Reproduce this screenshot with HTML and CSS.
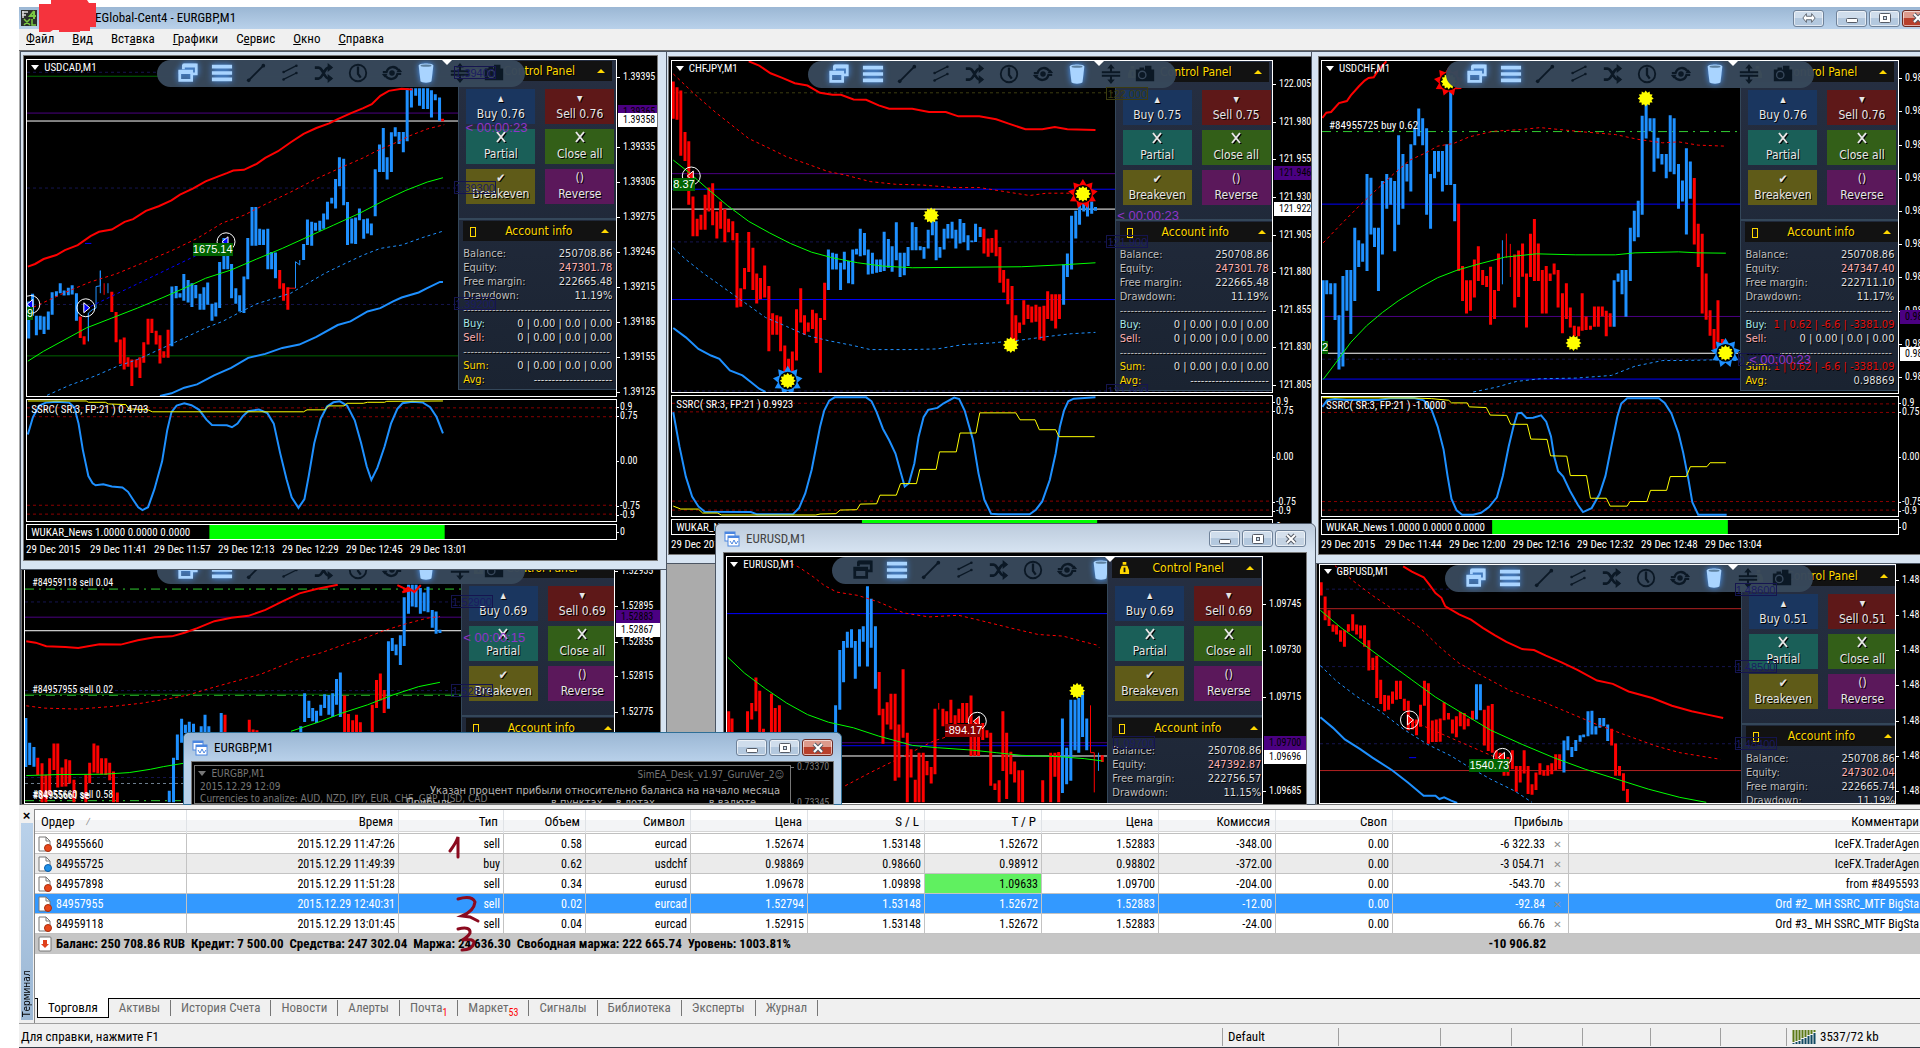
FILE: index.html
```
<!DOCTYPE html>
<html lang="ru">
<head>
<meta charset="utf-8">
<title>EGlobal-Cent4 - EURGBP,M1</title>
<link rel="stylesheet" href="styles.css">
</head>
<body>
<svg class="defs" aria-hidden="true">
  <symbol id="i-windows" viewBox="0 0 24 24"><path d="M7 3h14v10h-4M7 3v5" fill="none" stroke="currentColor" stroke-width="3"/><path d="M3 10h13v10H3z" fill="none" stroke="currentColor" stroke-width="3"/><path d="M6 4h15M2 11h15" stroke="currentColor" stroke-width="4"/></symbol>
  <symbol id="i-bars" viewBox="0 0 24 24"><path d="M1 5h22M1 12h22M1 19h22" stroke="currentColor" stroke-width="4"/></symbol>
  <symbol id="i-line" viewBox="0 0 24 24"><path d="M4 20L20 4" stroke="currentColor" stroke-width="2"/><circle cx="4" cy="20" r="2" fill="currentColor"/><circle cx="20" cy="4" r="2" fill="currentColor"/></symbol>
  <symbol id="i-channel" viewBox="0 0 24 24"><path d="M5 11L19 4M5 19L19 12" stroke="currentColor" stroke-width="1.5"/><circle cx="5" cy="11" r="1.4" fill="currentColor"/><circle cx="19" cy="4" r="1.4" fill="currentColor"/><circle cx="5" cy="19" r="1.4" fill="currentColor"/><circle cx="19" cy="12" r="1.4" fill="currentColor"/></symbol>
  <symbol id="i-shuffle" viewBox="0 0 24 24"><path d="M2 6h4c5 0 6 12 11 12h3M2 18h4c5 0 6-12 11-12h3" fill="none" stroke="currentColor" stroke-width="3"/><path d="M16 1l6 5-6 5zM16 13l6 5-6 5z" fill="currentColor"/></symbol>
  <symbol id="i-clock" viewBox="0 0 24 24"><circle cx="12" cy="12" r="9" fill="none" stroke="currentColor" stroke-width="2"/><path d="M12 5v8l3 4" fill="none" stroke="currentColor" stroke-width="2.5"/></symbol>
  <symbol id="i-eye" viewBox="0 0 24 24"><path d="M2 11h4c2-7 10-7 13-2M22 13h-4c-2 7-10 7-13 2" fill="none" stroke="currentColor" stroke-width="2.5"/><path d="M17 11h6l-3-4zM1 13h6l-3 4z" fill="currentColor"/><circle cx="12" cy="12" r="3" fill="currentColor"/></symbol>
  <symbol id="i-bucket" viewBox="0 0 24 24"><path d="M4 4c0-3 16-3 16 0l-2 17c-1 2-11 2-12 0z" fill="currentColor"/><ellipse cx="12" cy="4" rx="6" ry="1.2" fill="#5b7f9f"/></symbol>
  <symbol id="i-spread" viewBox="0 0 24 24"><path d="M2 10h20M2 14h20M12 3v6M12 15v6" stroke="currentColor" stroke-width="2.2"/><path d="M8 6l4-5 4 5zM8 18l4 5 4-5z" fill="currentColor"/></symbol>
  <symbol id="i-camera" viewBox="0 0 24 24"><path d="M2 7h4V5h5v2h1V3h7v4h3v13H2z" fill="currentColor"/><circle cx="9" cy="13" r="4" fill="none" stroke="#37475a" stroke-width="1.5"/></symbol>
  <symbol id="i-bag" viewBox="0 0 12 14"><path d="M4 0h4v3H4zM3 4h6l2 5v4H1V9z" fill="#ffd800"/><path d="M6 6v5" stroke="#111" stroke-width="2"/></symbol>
  <symbol id="i-chart" viewBox="0 0 16 16"><rect x="1" y="1" width="10" height="9" fill="#fff" stroke="#4a86e0"/><path d="M1 2h10" stroke="#4a86e0" stroke-width="2"/><rect x="4" y="5" width="11" height="10" fill="#fff" stroke="#4a86e0"/><path d="M4 6h11" stroke="#4a86e0" stroke-width="2"/><path d="M6 10l2 3 2-4 2 4 2-3" fill="none" stroke="#4a86e0"/></symbol>
  <symbol id="i-min" viewBox="0 0 14 12"><rect x="1.500" y="6.500" width="11" height="4" rx="1" fill="#fff" stroke="#555b66"/></symbol>
  <symbol id="i-max" viewBox="0 0 14 12"><rect x="1.500" y="1.500" width="11" height="9" rx="1" fill="#fff" stroke="#555b66"/><rect x="5.500" y="4.500" width="3" height="3" fill="#cfe0ef" stroke="#555b66"/></symbol>
  <symbol id="i-close" viewBox="0 0 14 12"><path d="M3 2l8 8M11 2l-8 8" stroke="#555b66" stroke-width="4"/><path d="M3 2l8 8M11 2l-8 8" stroke="#fff" stroke-width="2"/></symbol>
  <symbol id="i-swap" viewBox="0 0 16 12"><path d="M1 6l4-5v3h6V1l4 5-4 5V8H5v3z" fill="#fff" stroke="#555b66"/></symbol>
  <symbol id="i-cross" viewBox="0 0 12 12"><path d="M2 1l8 10M10 1L2 11" stroke="#000" stroke-width="2" transform="translate(1 1)"/><path d="M2 1l8 10M10 1L2 11" stroke="#e6e6e6" stroke-width="2"/></symbol>
  <symbol id="i-sell" viewBox="0 0 16 16"><path d="M2 1h7l4 4v10H2z" fill="#fff" stroke="#777"/><path d="M9 1v4h4" fill="none" stroke="#777"/><circle cx="11" cy="12" r="3.500" fill="#e8481c" stroke="#a92c0a"/></symbol>
  <symbol id="i-buy" viewBox="0 0 16 16"><path d="M2 1h7l4 4v10H2z" fill="#fff" stroke="#777"/><path d="M9 1v4h4" fill="none" stroke="#777"/><circle cx="11" cy="12" r="3.500" fill="#1e90e8" stroke="#0a5ca9"/></symbol>
  <symbol id="i-total" viewBox="0 0 16 16"><rect x="2" y="1" width="12" height="14" rx="1" fill="#fff" stroke="#777"/><path d="M8 12L4 8h2V4h4v4h2z" fill="#e0401c"/></symbol>
</svg>

<div class="app">
  <header class="titlebar">
    <svg class="logo" viewBox="0 0 16 16" aria-hidden="true"><rect width="16" height="16" fill="#2b2f2b"/><path d="M1 2h6M2 1v7M1 5h4" stroke="#ddd" stroke-width="1.500"/><path d="M13 1L9 6h6M13 1v8" fill="none" stroke="#7ac943" stroke-width="2"/><path d="M3 9l6 6M9 9l-6 6M11 9v6h4" fill="none" stroke="#7ac943" stroke-width="1.500"/></svg>
    <svg class="blot" viewBox="0 0 57 33" aria-hidden="true"><path d="M0 4h12V0h36l2 3h7v24h-6v4H41v1H20v-2h-6l-3 2H0z" fill="#f5333d"/></svg>
    <h1>EGlobal-Cent4 - EURGBP,M1</h1>
    <div class="sysbuttons">
      <button class="sys swap" aria-label="Switch"><svg><use href="#i-swap"/></svg></button>
      <button class="sys" aria-label="Minimize"><svg><use href="#i-min"/></svg></button>
      <button class="sys" aria-label="Maximize"><svg><use href="#i-max"/></svg></button>
      <button class="sys close" aria-label="Close"><svg><use href="#i-close"/></svg></button>
    </div>
  </header>
  <nav class="menubar">
    <a href="#"><u>Ф</u>айл</a><a href="#"><u>В</u>ид</a><a href="#">Вст<u>а</u>вка</a><a href="#"><u>Г</u>рафики</a><a href="#">С<u>е</u>рвис</a><a href="#"><u>О</u>кно</a><a href="#"><u>С</u>правка</a>
  </nav>
  <main class="workspace" id="workspace"></main>

  <section class="terminal" aria-label="Терминал">
    <div class="side"><button class="hide" aria-label="Закрыть">×</button><div class="sidebar"><span>Терминал</span></div></div>
    <div class="content">
      <div class="tablewrap">
      <table>
        <colgroup><col class="c-order"><col class="c-time"><col class="c-type"><col class="c-vol"><col class="c-type"><col class="c-price"><col class="c-price"><col class="c-price"><col class="c-price"><col class="c-price"><col class="c-price"><col class="c-profit"><col></colgroup>
        <thead><tr><th>Ордер <i>⁄</i></th><th>Время</th><th>Тип</th><th>Объем</th><th>Символ</th><th>Цена</th><th>S / L</th><th>T / P</th><th>Цена</th><th>Комиссия</th><th>Своп</th><th>Прибыль</th><th>Комментари</th></tr></thead>
        <tbody>
          <tr><td><svg><use href="#i-sell"/></svg>84955660</td><td>2015.12.29 11:47:26</td><td>sell</td><td>0.58</td><td>eurcad</td><td>1.52674</td><td>1.53148</td><td>1.52672</td><td>1.52883</td><td>-348.00</td><td>0.00</td><td>-6 322.33<button aria-label="Закрыть">✕</button></td><td>IceFX.TraderAgen</td></tr>
          <tr class="alt"><td><svg><use href="#i-buy"/></svg>84955725</td><td>2015.12.29 11:49:39</td><td>buy</td><td>0.62</td><td>usdchf</td><td>0.98869</td><td>0.98660</td><td>0.98912</td><td>0.98802</td><td>-372.00</td><td>0.00</td><td>-3 054.71<button aria-label="Закрыть">✕</button></td><td>IceFX.TraderAgen</td></tr>
          <tr><td><svg><use href="#i-sell"/></svg>84957898</td><td>2015.12.29 11:51:28</td><td>sell</td><td>0.34</td><td>eurusd</td><td>1.09678</td><td>1.09898</td><td class="hit">1.09633</td><td>1.09700</td><td>-204.00</td><td>0.00</td><td>-543.70<button aria-label="Закрыть">✕</button></td><td>from #8495593</td></tr>
          <tr class="selected"><td><svg><use href="#i-sell"/></svg>84957955</td><td>2015.12.29 12:40:31</td><td>sell</td><td>0.02</td><td>eurcad</td><td>1.52794</td><td>1.53148</td><td>1.52672</td><td>1.52883</td><td>-12.00</td><td>0.00</td><td>-92.84<button aria-label="Закрыть">✕</button></td><td>Ord #2_ MH SSRC_MTF BigSta</td></tr>
          <tr><td><svg><use href="#i-sell"/></svg>84959118</td><td>2015.12.29 13:01:45</td><td>sell</td><td>0.04</td><td>eurcad</td><td>1.52915</td><td>1.53148</td><td>1.52672</td><td>1.52883</td><td>-24.00</td><td>0.00</td><td>66.76<button aria-label="Закрыть">✕</button></td><td>Ord #3_ MH SSRC_MTF BigSta</td></tr>
        </tbody>
        <tfoot><tr><td colspan="11"><svg><use href="#i-total"/></svg>Баланс: 250 708.86 RUB&nbsp; Кредит: 7 500.00&nbsp; Средства: 247 302.04&nbsp; Маржа: 24 636.30&nbsp; Свободная маржа: 222 665.74&nbsp; Уровень: 1003.81%</td><td class="total">-10 906.82</td><td></td></tr></tfoot>
      </table>
      <svg class="ink" viewBox="0 0 40 126" aria-hidden="true"><g fill="none" stroke="#8b0a1e" stroke-width="3" stroke-linecap="round"><path d="M2 16q6-8 8-14v20"/><path d="M10 64q14-4 17 3q-1 9-13 14l8 1 8 4"/><path d="M10 94q13-3 12 4q-2 4-8 7q12-2 12 3q-2 7-12 7"/></g></svg>
      </div>
      <nav class="tabs">
        <a href="#" class="active">Торговля</a><a href="#">Активы</a><a href="#">История Счета</a><a href="#">Новости</a><a href="#">Алерты</a><a href="#">Почта<sub>1</sub></a><a href="#">Маркет<sub>53</sub></a><a href="#">Сигналы</a><a href="#">Библиотека</a><a href="#">Эксперты</a><a href="#">Журнал</a>
      </nav>
    </div>
  </section>
  <footer class="status">
    <span>Для справки, нажмите F1</span><span>Default</span><span></span><span></span><span></span><span></span><span></span><span></span>
    <span><svg viewBox="0 0 24 14" aria-hidden="true"><path d="M1.500 0v12M4.500 0v11M7.500 0v10M10.500 0v8M13.500 0v7M16.500 0v5M19.500 0v4M22.500 0v2" stroke="#5d7a17" stroke-width="2"/><path d="M1.500 13v1M4.500 12v2M7.500 11v3M10.500 9v5M13.500 8v6M16.500 6v8M19.500 5v9M22.500 3v11" stroke="#124a63" stroke-width="2"/></svg>3537/72 kb</span>
  </footer>
</div>
<script src="charts.js"></script>
</body>
</html>
```
FILE: styles.css
```
*, ::before, ::after { box-sizing: border-box; }
body { margin: 0; background: #fff; color: #000; font: 13px/16px "Roboto Condensed", "Open Sans", sans-serif; overflow: hidden; }
button { font: inherit; color: inherit; padding: 0; border: 0; background: none; }
a { color: inherit; text-decoration: none; }
.defs { position: absolute; width: 0; height: 0; }

.app { display: flex; flex-direction: column; height: 100vh; padding: 7px 0 0 19px; }

/* main window chrome */
.titlebar { position: relative; flex: none; display: flex; align-items: center; height: 22px; padding-left: 2px; background: linear-gradient(#9bb7d4, #b9d1ea); }
.titlebar h1 { margin: 0 auto 0 58px; padding-bottom: 1px; font-size: 13px; font-weight: 400; }
.logo { width: 16px; height: 16px; }
.blot { position: absolute; left: 20px; top: -7px; width: 57px; height: 33px; z-index: 1; }
.sysbuttons { display: flex; gap: 2px; margin-right: -13px; }
.sys { display: grid; place-items: center; width: 31px; height: 17px; border: 1px solid #6f8299; border-radius: 3px; background: linear-gradient(#cfddec 50%, #b3c8de 50%); box-shadow: inset 0 0 0 1px rgba(255,255,255,.6); }
.sys svg { width: 14px; height: 12px; }
.sys.swap { margin-right: 10px; }
.sys.close { border-color: #6b2a22; background: linear-gradient(#dd9a8c 50%, #b8402c 50%); }
.menubar { flex: none; display: flex; gap: 18px; align-items: center; height: 21px; padding: 0 0 2px 7px; background: #f0f0f0; }

/* MDI workspace */
.workspace { position: relative; flex: 1; min-height: 0; overflow: hidden; background: #ababab; border-top: 1px solid #696969; }
.win { position: absolute; isolation: isolate; display: flex; flex-direction: column; background: #d7e4f2; border: 1px solid #4b5563; }
.win.framed { border-radius: 6px 6px 0 0; }
.win header { flex: none; display: flex; align-items: center; gap: 6px; height: 29px; color: #444; }
.win header svg.ico { width: 16px; height: 16px; }
.win header h2 { margin: 0 auto 0 0; font-size: 13px; font-weight: 400; }
.win header .sysbuttons { margin: 0; }
.win.active { background: #b9d1ea; border-color: #2f6f96; }
.win.framed::before { content: ""; position: absolute; inset: 0 0 auto; height: 29px; z-index: -1; border-radius: 6px 6px 0 0; background: linear-gradient(#bccbdc, #d7e4f2); }
.win.active::before { background: linear-gradient(#9bb7d4, #b9d1ea); }
.win.active header { color: #000; }
.win.framed:not(.active) .sys.close { border-color: #6f8299; background: linear-gradient(#d5e0ec 50%, #c3d2e2 50%); }
.body { flex: 1; min-height: 0; display: grid; row-gap: 2px; padding: 3px 0 0 2px; overflow: hidden; background: #000; color: #fff; box-shadow: 0 0 0 1px #777; font-size: 11px; line-height: 14px; }
.plot { position: relative; overflow: hidden; border: 1px solid #fff; }
.active .plot { border-color: #777; }
.active .axis { color: #777; }
.plot > svg { position: absolute; inset: 0; width: 100%; height: 100%; }
.plot path, .plot polyline, .plot line { vector-effect: non-scaling-stroke; fill: none; }
.axis { position: relative; font-size: 10px; }
.axis span { position: absolute; left: 6px; margin-top: -7px; white-space: nowrap; }
.axis span::before { content: ""; position: absolute; left: -6px; top: 7px; width: 3px; height: 1px; background: currentColor; }
.axis .now, .axis .ask { left: 1px; right: 0; padding-left: 5px; background: #fff; color: #000; }
.axis .ask { background: #4b0082; }
.axis .now::before, .axis .ask::before { display: none; }
.axis.small span { left: 3px; }
.axis.small span::before { left: -3px; width: 2px; }
.times { grid-column: 1 / -1; display: grid; padding-top: 1px; white-space: nowrap; }

.label { position: absolute; margin-top: -7px; height: 14px; white-space: nowrap; }
.label.order { font-size: 10px; }
.label.symbol::before { content: ""; display: inline-block; margin-right: 5px; vertical-align: 1px; border: 4px solid transparent; border-top: 5px solid currentColor; border-bottom: 0; }
.label.count { color: #8f35c9; font: 13px/14px "Liberation Sans", sans-serif; z-index: 3; }
.label.level, .label.olive { z-index: 3; width: 42px; height: 13px; border: 1px solid #15154f; color: #1b1b62; font: 11px/12px "Liberation Sans", sans-serif; text-align: center; }
.label.olive { border-color: #3c3c10; color: #3c3c10; }
.label.win-tag, .label.loss-tag { height: 13px; background: #006400; font: 11px/13px "Liberation Sans", sans-serif; overflow: hidden; }
.label.loss-tag { background: #8b0000; }
.label.shift { z-index: 4; height: 0; margin: 0 0 0 -5px; border: 5px solid transparent; border-top: 5px solid #fff; border-bottom: 0; }
.label.dim { color: #777; font: 10px/14px "DejaVu Sans Condensed", sans-serif; }
.label.note { color: #b5b5b5; font: 11px/14px "DejaVu Sans Condensed", sans-serif; }

.toolbar { position: absolute; top: 0; z-index: 2; display: flex; height: 27px; padding: 0 14px; border-radius: 14px; background: rgba(55, 71, 90, .98); color: #0b1825; }
.toolbar button { display: grid; place-items: center; width: 34px; height: 26px; }
.toolbar svg { width: 22px; height: 22px; }
.toolbar .on { color: #a9d4ff; filter: drop-shadow(0 0 3px #4d9cff); }

.panel { position: absolute; top: 0; width: 158px; height: 330px; border: 1px solid #34475a; border-right: 0; border-top: 0; background: linear-gradient(#262f42, #1a2331); color: #bdbdbd; font: 11px/14px "DejaVu Sans Condensed", "DejaVu Sans", sans-serif; text-shadow: 1px 1px #000; }
.under-panel .panel { z-index: 3; }
.panel h3 { display: flex; align-items: center; height: 20px; margin: 1px 4px 8px; padding: 0 7px; background: #121212; color: #ffd800; font-size: 12px; font-weight: 400; }
.panel h3 span { flex: 1; text-align: center; }
.panel h3 svg { width: 11px; height: 13px; }
.panel h3 b { width: 6px; height: 10px; margin-top: 2px; border: 1px solid #ffd800; }
.panel h3::after { content: ""; border: 4px solid transparent; border-bottom: 4px solid #ffd800; border-top: 0; }
.panel .keys { display: grid; grid-template-columns: 69px 69px; gap: 5px 10px; padding: 0 6px 14px 7px; border-bottom: 2px solid #34475a; }
.keys button { display: flex; flex-direction: column; justify-content: flex-end; align-items: center; height: 35px; padding-bottom: 1px; color: #e6e6e6; font-size: 12px; line-height: 17px; text-shadow: inherit; }
.keys i { height: 15px; font-style: normal; font-size: 12px; line-height: 15px; }
.keys svg { width: 12px; height: 12px; margin-bottom: 3px; }
.keys button:nth-child(1) { background: #1a365f; }
.keys button:nth-child(2) { background: #5e1818; }
.keys button:nth-child(3) { background: #1a5f58; }
.keys button:nth-child(4) { background: #335f18; }
.keys button:nth-child(5) { background: #5f5b18; }
.keys button:nth-child(6) { background: #5b185b; }
.panel .keys + h3 { margin: 1px 0 6px 4px; }
.panel dl { display: flex; flex-direction: column; margin: 0 4px; }
.panel dl div { display: flex; justify-content: space-between; height: 14px; white-space: nowrap; }
.panel dd { margin: 0; color: #dedede; }
.panel .rule { overflow: hidden; }
.panel .pink { color: #ffb0b0; }
.panel .cyan { color: #a5e5e5; }
.panel .gold { color: #ffd800; }
.panel .red { color: #e01010; }

/* terminal */
.terminal { flex: none; display: flex; height: 219px; padding-top: 4px; background: #f0f0f0; border-bottom: 1px solid #a0a0a0; }
.side { display: flex; flex-direction: column; width: 15px; padding-bottom: 3px; }
.hide { height: 14px; font: bold 13px/12px "Liberation Sans", sans-serif; }
.sidebar { flex: 1; display: flex; align-items: center; justify-content: flex-start; background: linear-gradient(#9bb7d4, #b9d1ea); writing-mode: vertical-rl; transform: rotate(180deg); margin: 0 1px 0 2px; }
.sidebar span { padding-top: 3px; font: 10px/12px "DejaVu Sans Condensed", sans-serif; }
.content { flex: 1; min-width: 0; display: flex; flex-direction: column; border-top: 1px solid #888; border-left: 1px solid #888; }
.tablewrap { position: relative; flex: 1; overflow: hidden; background: #fff; }
table { width: 100%; table-layout: fixed; border-collapse: separate; border-spacing: 0; font-size: 12px; }
.c-order { width: 152px; } .c-time { width: 212px; } .c-type { width: 105px; } .c-vol { width: 82px; } .c-price { width: 117px; } .c-profit { width: 176px; }
th, td { text-align: right; padding: 0 3px 0 0; font-weight: 400; white-space: nowrap; height: 20px; line-height: 18px; }
th { height: 24px; padding-right: 5px; font-size: 13px; border-right: 1px solid #dfe2e6; border-bottom: 1px solid #c0c0c0; background: linear-gradient(#fff 45%, #f3f4f6 45%); box-shadow: inset 0 -1px #fff, inset 0 -2px #d5d5d5; }
th:first-child { text-align: left; padding-left: 6px; }
th i { margin-left: 8px; color: #888; font-style: normal; }
td { border-right: 1px solid #c3c3c3; border-bottom: 1px solid #c3c3c3; }
td:first-child { text-align: left; padding-left: 2px; }
td:last-child, th:last-child { padding-right: 1px; border-right: 0; }
td svg { width: 16px; height: 16px; margin-right: 3px; vertical-align: -4px; }
td button { width: 20px; padding-left: 5px; color: #8f8f8f; font: bold 10px/14px "DejaVu Sans", sans-serif; }
.alt td { background: #ebebeb; }
.selected td { background: #3399ff; color: #fff; }
td.hit { background: #60f060; }
tfoot td { border: 0; background: #c6c6c6; font-size: 13px; font-weight: 700; }
tfoot .total { padding-right: 23px; }
.ink { position: absolute; left: 413px; top: 25px; width: 40px; height: 126px; }
.tabs { flex: none; display: flex; align-items: center; height: 25px; padding: 0 0 6px 2px; border-top: 1px solid #000; color: #6b6b6b; }
.tabs a { height: 16px; padding: 0 10px; border-right: 1px solid #777; }
.tabs .active { height: 20px; padding-top: 2px; background: #fff; border: 1px solid #000; border-top: 0; color: #000; }
.tabs sub { color: #f00; font-size: 10px; line-height: 0; }

.status { flex: none; display: grid; grid-template-columns: 1fr 116px 102px 71px 71px 68px 70px 66px 134px; align-items: center; height: 24px; padding: 3px 0 1px; background: #f0f0f0; border-bottom: 1px solid #333a44; }
.status span { display: flex; align-items: center; gap: 4px; height: 18px; padding-left: 5px; border-left: 1px solid #a0a0a0; }
.status span:first-child { border: 0; padding-left: 2px; }
.status svg { width: 24px; height: 14px; }
```
FILE: charts.js
```
// Chart windows. `box` is the window's place on the desktop, `view` the drawing units of its plot.
// Bars are listed as "x high low" after a colour letter: b = up, r = down.
const COLORS = { b: '#1e90ff', r: '#ff0000' };

const CHARTS = [
  {
    symbol: 'EURCAD,M1', box: { left: 1, top: 501, width: 647, bottom: 0 }, pad: '0 6px 0 1px', plotW: 591,
    view: [55, 528, 1384, 744], tool: 365, panel: 1079, lots: '0.69', marker: 1047,
    account: ['250708.86', '247301.78', '222665.48', '11.19%'],
    levels: [['#32cd32', 625, 'dd'], ['#32cd32', 946, 'dd'], ['#32cd32', 1265, 'dd'], ['#15154f', 664, 'd'], ['#15154f', 932, 'd'], ['#15154f', 1195, 'd'], ['#4b0082', 710], ['#fff', 751], ['#006400', 943], ['#708090', 1213, 'd']],
    bars: 'b 57 1015 1163 66 1090 1157 76 1103 1162 r 85 1135 1187 95 1152 1270 104 1187 1270 113 1137 1250 123 1092 1172 132 1092 1225 142 1165 1223 151 1140 1222 160 1143 1213 170 1202 1270 198 1187 1270 207 1150 1212 217 1092 1180 226 1098 1183 235 1137 1185 245 1137 1187 254 1150 1203 263 1177 1270 272 1240 1270 b 394 1235 1270 404 1135 1270 413 1065 1142 423 1017 1090 432 1035 1060 441 1026 1060 451 1032 1060 469 1040 1060 478 1005 1060 487 1040 1060 516 1000 1060 r 525 1005 1060 582 1020 1060 591 1050 1060 600 1052 1060 b 703 1040 1060 712 940 1027 722 963 1015 731 985 1025 740 993 1030 750 975 1008 759 943 985 769 945 1005 778 940 1012 787 897 975 796 877 1012 r 806 947 1060 815 1003 1060 825 1022 1060 834 1005 1060 843 1028 1060 871 975 1060 881 900 985 890 880 962 899 930 1000 b 909 783 987 918 773 812 927 793 825 937 765 855 946 650 797 956 612 700 965 612 678 974 612 680 984 622 700 993 635 692 1002 618 695 1012 688 742 1021 693 760 1030 748 758',
    lines: [
      ['#f00', 2, '58,783 80,787 105,798 150,800 180,803 230,792 280,793 320,780 360,771 400,768 430,757 460,743 500,722 540,712 580,706 620,688 660,662 700,638 740,625 790,612'],
      ['#f00', 1, '58,978 100,985 180,988 260,980 330,970 400,955 440,945 490,925 560,900 610,882 700,835 750,818 800,795 850,775 900,750 950,730 1000,713 1030,708', 1],
      ['#0f0', 1, '58,1189 130,1186 240,1185 300,1180 350,1170 380,1162 427,1152'],
      ['#0f0', 1, '680,1055 750,1025 800,1000 860,975 920,945 980,920 1030,907'],
      ['#f00', 2, '930,613 958,630 942,635 955,620 970,634 985,613']],
    labels: [['order', 72, 608, '#84959118 sell 0.04'], ['order', 72, 929, '#84957955 sell 0.02'], ['order', 72, 1248, '#84955660 sell 0.58'], ['order', 74, 1250, '#84955661 se'], ['count', 1085, 772, '&lt; 00:00:15'], ['level', 1056, 665, '1.52900'], ['level', 1056, 932, '1.52800']],
    axis: [[572, '1.52935'], [677, '1.52895'], [785, '1.52855'], [889, '1.52815'], [997, '1.52775'], [710, '1.52883', 'ask'], [751, '1.52867', 'now']]
  },
  {
    symbol: 'GBPUSD,M1', box: { left: 1297, top: 509, width: 640, bottom: 0 }, pad: '0', plotW: 577,
    view: [47, 523, 1459, 719], tool: 365, panel: 1115, lots: '0.51', marker: 1094,
    account: ['250708.86', '247302.04', '222665.74', '11.19%'],
    levels: [['#b22222', 655], ['#b22222', 1144], ['#15154f', 596, 'd'], ['#15154f', 830, 'd'], ['#15154f', 1063, 'd']],
    bars: 'r 50 575 615 60 618 690 70 660 707 80 703 725 89 705 733 99 720 755 109 720 770 119 702 725 130 672 722 140 703 733 150 706 745 160 705 770 171 750 842 181 803 840 191 797 925 201 870 943 211 916 965 221 917 960 231 905 942 241 873 930 251 873 928 261 927 963 271 933 1022 282 990 1020 292 990 1037 302 945 1012 312 873 948 322 880 1063 332 993 1058 342 990 1058 352 987 1057 362 938 992 373 970 990 383 990 1032 393 980 1043 403 967 1010 413 970 1020 423 987 1010 434 963 990 b 444 883 990 454 883 962 r 464 960 1068 474 948 1085 484 943 1090 494 1083 1120 504 1090 1140 514 1110 1160 524 1103 1160 535 1083 1140 545 1130 1208 555 1130 1180 565 1083 1153 575 1130 1215 585 1185 1217 595 1150 1203 605 1122 1157 615 1143 1160 625 1128 1160 635 1122 1155 645 1095 1143 655 1095 1140 b 666 1053 1150 676 1040 1083 686 1073 1103 696 1052 1085 707 1037 1057 716 1035 1043 727 965 1040 737 963 1035 747 1010 1035 757 985 1015 767 985 1010 777 1005 1055 r 787 1018 1068 797 1062 1160 807 1130 1160 817 1152 1205 827 1200 1240',
    lines: [
      ['#f00', 2, '258,527 280,543 310,560 325,583 340,608 355,622 365,648 400,672 430,688 460,713 490,735 520,755 560,777 590,780 620,797 660,817 700,840 750,872 790,882 830,905 890,925 940,948 990,965 1030,975 1070,985'],
      ['#f00', 1, '85,525 130,570 180,615 230,655 300,712 350,770 400,820 470,865 530,903 610,935 680,970 750,1005 830,1040 900,1070 960,1090 1063,1110', 1],
      ['#f00', 1, '272,990 500,1108', 1],
      ['#0f0', 1, '48,660 100,712 160,765 220,818 280,870 340,922 400,965 480,1022 560,1065 640,1105 720,1140 800,1170 880,1200 960,1225 1027,1240'],
      ['#1e90ff', 1, '48,827 90,875 140,920 200,965 260,1020 320,1065 380,1100 420,1130 480,1170 540,1205 585,1240', 1],
      ['#1e90ff', 2, '48,983 80,1015 110,1050 150,1080 180,1105 230,1143 270,1180 310,1220 340,1220 350,1230 362,1225 380,1235 395,1242'],
      ['#00f', 1, '273,1105 291,1105']],
    deals: [[274, 991, 'right', '#f00'], [510, 1104, 'left', '#f00']],
    labels: [['symbol', 56, 545, 'GBPUSD,M1'], ['win-tag', 426, 1130, '1540.73'], ['level', 1099, 598, '1.48600'], ['level', 1099, 831, '1.48500'], ['level', 1099, 1064, '1.48400']],
    axis: [[572, '1.48610'], [677, '1.48565'], [782, '1.48520'], [886, '1.48475'], [992, '1.48430'], [1097, '1.48385'], [1202, '1.48340']]
  },
  {
    symbol: 'CHFJPY,M1', box: { left: 646, top: 0, width: 648, height: 513 }, pad: '5px 1px 9px 3px', plotW: 602, plotH: 333, indH: 122,
    view: [27, 61, 1431, 999], tool: 352, panel: 1083, lots: '0.75', marker: 1046,
    account: ['250708.86', '247301.78', '222665.48', '11.19%'], buy: '0 | 0.00 | 0.0 | 0.00', avg: '----------------------',
    levels: [['#3c3c10', 157, 'd'], ['#4b0082', 401], ['#00f', 448], ['#00f', 781], ['#fff', 508], ['#15154f', 607, 'd'], ['#15154f', 1057, 'd']],
    bars: 'r 30 123 235 39 140 238 48 150 347 58 275 363 67 303 495 77 470 590 87 537 590 96 525 570 106 465 570 115 443 515 124 430 557 134 515 597 143 485 567 153 508 608 162 537 578 172 545 602 182 580 805 191 747 803 200 686 750 210 577 698 220 625 752 229 702 793 238 716 780 248 678 775 258 740 937 267 822 887 277 828 887 286 832 937 296 920 1000 305 960 1002 314 938 1000 324 810 965 334 747 850 343 828 887 352 850 878 362 812 870 371 822 912 381 837 1002 391 730 843 b 400 630 752 410 640 690 419 643 690 429 670 752 438 637 690 448 665 732 458 630 735 467 628 645 476 567 650 486 580 647 495 630 705 505 640 703 515 660 700 524 660 698 533 576 695 543 598 685 552 620 697 562 548 662 571 640 713 581 640 708 590 622 680 600 548 632 609 562 632 619 620 632 628 622 658 638 570 627 648 545 587 657 545 662 666 622 655 676 567 630 685 553 597 695 546 597 704 570 627 714 538 612 723 550 608 733 587 632 742 603 608 751 552 607 762 562 592 r 771 567 642 781 597 652 790 595 640 800 570 650 809 622 730 818 692 760 828 718 795 838 740 900 847 828 907 856 850 882 866 783 857 876 797 840 885 802 850 895 797 848 904 803 902 914 800 905 923 756 840 933 765 845 942 765 868 951 765 840 b 961 675 797 970 642 713 980 528 690 990 513 597 999 492 555 1009 480 515 1018 490 530 1028 485 522 1037 502 513',
    lines: [
      ['#f00', 2, '210,62 235,75 262,98 290,112 320,128 350,135 380,157 410,163 430,163 460,177 490,178 520,195 545,205 600,205 640,215 680,215 710,228 760,228 800,237 830,250 870,267 910,267 940,260 970,267 1037,269'],
      ['#f00', 1, '30,100 80,160 130,215 170,255 210,295 260,325 300,350 350,372 400,395 440,405 500,425 560,433 620,435 700,443 760,443 820,455 880,467 920,460 1000,460', 1],
      ['#0f0', 1, '30,360 70,400 110,445 160,498 210,545 260,580 310,612 360,638 410,655 470,670 530,680 600,685 860,682 960,676 1037,670'],
      ['#1e90ff', 1, '30,625 60,660 100,700 150,745 200,790 250,835 300,862 350,890 400,905 460,920 500,932 590,932 660,930 720,917 790,912 860,903 920,893 980,884 1037,880', 1],
      ['#1e90ff', 2, '30,867 60,895 90,930 120,950 140,960 165,995 195,1010 215,1030 235,1050 250,1060']],
    suns: [[645, 527], [835, 918], [1007, 462, '#f00'], [303, 1026, '#1e90ff']],
    deals: [[73, 408, 'left', '#f00']],
    labels: [['symbol', 36, 86, 'CHFJPY,M1'], ['win-tag', 30, 435, '8.37'], ['count', 1089, 528, '&lt; 00:00:23'], ['olive', 1063, 160, '122.000'], ['level', 1063, 608, '121.900'], ['level', 1063, 1058, '121.800']],
    axis: [[133, '122.005'], [247, '121.980'], [358, '121.955'], [472, '121.930'], [587, '121.905'], [697, '121.880'], [812, '121.855'], [922, '121.830'], [1035, '121.805'], [401, '121.946', 'ask'], [508, '121.922', 'now']],
    ind: { view: [27, 16, 1431, 363], title: 'SSRC( SR:3, FP:21 ) 0.9923', marks: [38, 64, 200, 334, 361],
      blue: '30,65 45,170 60,260 75,320 90,350 105,366 215,367 230,374 315,374 330,355 345,310 360,240 370,175 380,110 390,60 402,30 415,20 490,20 503,32 515,65 530,115 545,150 560,190 572,245 582,290 592,280 605,220 615,140 627,80 638,58 660,52 675,38 700,21 712,25 725,60 745,150 758,250 772,330 788,372 805,374 880,374 895,360 910,335 928,270 942,190 952,110 962,60 972,32 985,24 1037,20',
      yellow: '30,349 48,358 90,358 100,370 135,370 145,376 370,376 380,373 418,372 428,361 468,360 476,343 515,342 523,316 562,316 572,281 610,281 618,238 657,238 665,185 705,185 714,128 752,128 761,67 847,67 857,88 893,88 903,118 942,118 950,139 1035,139',
      news: [480, 1041], times: ['29 Dec 2015', '29 Dec 11:44'], step: 67 }
  },
  {
    symbol: 'USDCHF,M1', box: { left: 1292, top: 0, width: 660, height: 513 }, pad: '5px 9px 9px 7px', plotW: 578, plotH: 334, indH: 121,
    view: [57, 181, 1459, 1002], tool: 370, panel: 1117, lots: '0.76', marker: 1097,
    account: ['250708.86', '247347.40', '222711.10', '11.17%'], buy: '1 | 0.62 | -6.6 | -3381.09', avg: '0.98869',
    levels: [['#32cd32', 394, 'dd'], ['#00f', 613], ['#00f', 1141], ['#4b0082', 952], ['#fff', 1063], ['#15154f', 1081, 'd']],
    bars: 'b 60 843 1030 69 843 885 79 852 885 90 852 963 100 948 1112 110 830 1103 120 812 935 130 812 1005 140 684 905 150 722 803 160 732 787 171 522 815 181 533 705 190 684 742 200 684 875 210 543 765 221 522 627 231 533 615 241 543 755 251 405 675 262 462 627 272 492 545 282 432 575 292 384 435 302 324 408 312 354 435 322 384 645 332 522 687 342 453 535 352 453 515 362 453 575 373 432 555 383 262 555 393 552 665 r 403 612 815 413 800 905 423 843 943 433 843 935 443 780 895 453 740 845 464 812 857 474 830 863 484 802 977 494 872 960 504 762 875 545 765 925 555 753 893 565 732 832 575 822 985 585 702 833 595 658 845 605 732 845 615 812 943 625 800 943 635 822 845 645 792 825 655 812 925 666 882 1003 676 852 960 686 925 985 696 980 1012 707 982 1012 716 882 995 726 952 993 737 980 992 747 922 983 757 922 983 767 922 952 777 935 1012 787 942 983 b 797 843 983 807 822 847 817 812 885 827 812 953 838 684 845 848 633 725 858 603 713 868 346 645 878 305 415 888 354 393 898 354 515 908 413 475 918 462 493 929 462 535 939 345 515 949 354 523 960 492 627 970 542 605 980 444 705 990 484 597 r 1000 534 735 1010 672 803 1020 702 943 1030 822 962 1040 933 1010 1050 990 1050 1060 903 1030 1071 1020 1060',
    lines: [
      ['#1e90ff', 1, '514,722 514,855'], ['#f00', 1, '524,702 524,775'], ['#f00', 1, '534,733 534,833'],
      ['#f00', 2, '58,353 68,337 80,335 100,308 120,302 130,285 150,258 165,240 175,232 188,230 200,208 220,182'],
      ['#f00', 1, '60,730 100,680 150,620 190,575 240,520 280,480 320,458 350,438 390,430 430,410 490,393 560,388 610,382 660,388 720,395 800,403 860,418 920,428 960,425 1010,435 1080,438', 1],
      ['#0f0', 1, '60,1142 90,1095 130,1030 170,980 210,940 250,905 300,868 350,835 400,812 450,795 520,773 600,763 700,766 800,766 850,760 960,757 1010,760 1080,761'],
      ['#1e90ff', 1, '440,1180 500,1165 550,1148 610,1140 700,1138 790,1130 850,1102 920,1085 960,1085 1050,1083 1110,1085', 1]],
    suns: [[877, 294], [694, 1032], [378, 243, '#f00'], [1079, 1062, '#1e90ff']],
    labels: [['symbol', 67, 206, 'USDCHF,M1'], ['', 75, 377, '#84955725 buy 0.62'], ['win-tag', 57, 1046, '2'], ['level', 1110, 1083, '0.98800'], ['count', 1139, 1084, '&lt; 00:00:23']],
    axis: [[235, '0.98885'], [334, '0.98875'], [436, '0.98865'], [535, '0.98855'], [634, '0.98845'], [733, '0.98835'], [832, '0.98825'], [933, '0.98815'], [1033, '0.98805'], [1132, '0.98795'], [952, '0.98813', 'ask'], [1063, '0.98802', 'now']],
    ind: { view: [57, 20, 1459, 362], title: 'SSRC( SR:3, FP:21 ) -1.0000', marks: [41, 67, 203, 338, 364],
      blue: '58,50 70,30 90,26 120,29 200,29 230,24 290,23 315,30 335,60 350,110 365,180 375,260 385,330 398,365 412,378 440,378 460,372 480,355 500,325 515,260 530,170 542,110 552,70 562,68 575,84 592,83 612,76 625,95 637,140 645,200 655,245 668,262 685,305 705,348 718,370 740,358 760,315 775,260 790,170 805,80 815,40 830,24 910,24 925,38 942,70 960,130 972,190 985,270 995,340 1010,378 1082,378',
      yellow: '58,22 290,23 335,25 378,30 385,38 425,38 430,50 473,52 483,75 525,76 535,103 577,103 586,148 627,149 636,199 677,200 686,259 727,259 737,328 777,328 787,352 830,352 837,338 880,338 889,304 930,304 939,262 980,262 990,232 1032,232 1040,220 1080,220',
      news: [488, 1085], times: ['29 Dec 2015', '29 Dec 11:44', '29 Dec 12:00', '29 Dec 12:16', '29 Dec 12:32', '29 Dec 12:48', '29 Dec 13:04'], step: 64 }
  },
  {
    symbol: 'USDCAD,M1', box: { left: 1, top: 0, width: 647, height: 519 }, pad: '4px 9px 9px 3px', plotW: 591, plotH: 338, indH: 123,
    view: [61, 177, 1382, 1013], tool: 367, panel: 1073, lots: '0.76', marker: 1047,
    account: ['250708.86', '247301.78', '222665.48', '11.19%'], buy: '0 | 0.00 | 0.0 | 0.00', avg: '----------------------',
    levels: [['#006400', 226], ['#006400', 1069], ['#4b0082', 337], ['#fff', 361], ['#15154f', 214, 'd'], ['#15154f', 563, 'd'], ['#15154f', 914, 'd']],
    bars: 'b 65 905 1017 74 882 948 83 948 1007 92 948 990 101 950 1003 111 935 990 120 877 945 130 874 890 139 850 880 148 872 887 158 864 886 167 856 884 177 880 963 r 186 950 1015 195 1010 1035 260 876 937 270 937 1028 280 1020 1093 289 1014 1110 298 1073 1102 307 1080 1160 317 1080 1104 326 1073 1136 335 1028 1090 345 957 1035 354 957 1000 364 993 1035 373 1007 1092 382 1055 1075 392 990 1075 b 401 860 1040 411 858 895 420 880 893 429 822 903 439 840 908 448 850 922 457 855 895 467 882 930 476 862 930 485 848 915 495 912 963 504 908 950 513 786 925 523 714 808 532 730 808 541 792 895 551 865 912 560 886 935 570 830 940 579 714 838 589 620 737 598 620 737 607 686 735 616 688 735 626 686 808 635 756 808 644 757 835 r 654 810 867 663 850 903 673 862 930 b 710 732 780 719 658 735 729 665 737 738 668 692 748 662 692 757 640 686 766 604 658 776 592 610 785 536 625 794 470 558 804 475 615 813 605 735 823 655 730 832 652 732 841 625 660 851 657 716 860 655 700 869 670 705 878 506 648 888 432 515 897 382 515 906 470 537 916 395 515 925 380 408 934 394 430 944 394 455 953 262 422 963 262 320 973 262 285 982 262 315 991 262 325 1001 262 325 1010 268 350 1019 280 298 1029 290 360 r 1036 354 362',
    lines: [
      ['#1e90ff', 1, '205,940 205,1025 205,940 214,930 223,925 223,860 233,858 233,812 233,880'], ['#f00', 1, '242,850 242,885'], ['#1e90ff', 1, '251,850 251,880'], ['#f00', 1, '673,865 691,865'], ['#1e90ff', 1, '691,865 691,785 701,795 701,780'],
      ['#f00', 2, '63,800 80,792 100,777 130,765 150,750 180,735 210,708 230,695 260,688 290,665 310,657 340,632 370,618 400,600 420,583 450,565 480,543 510,528 530,518 545,510 570,508 600,490 620,472 650,452 680,425 710,400 740,382 770,368 790,355 820,338 850,322 870,310 890,285 910,270 940,264 965,266'],
      ['#f00', 1, '63,930 100,908 150,878 210,846 270,822 330,790 400,752 460,715 520,668 570,645 620,612 680,575 740,535 800,500 850,472 880,452 920,430 960,405 1000,385 1040,372', 1],
      ['#0f0', 1, '63,1085 100,1055 150,1020 200,985 260,955 320,925 380,893 430,865 480,835 540,810 600,777 660,745 720,710 780,675 840,640 900,600 950,570 1000,545 1037,532'],
      ['#1e90ff', 1, '108,1188 160,1158 220,1130 270,1102 320,1080 380,1045 430,1015 480,985 520,965 560,938 600,912 640,896 680,880 720,850 760,820 800,795 850,765 890,745 940,735 990,712 1037,693', 1],
      ['#1e90ff', 2, '373,1190 400,1182 430,1165 460,1155 500,1128 540,1105 580,1075 620,1063 660,1045 700,1035 740,1012 790,976 820,965 860,935 890,925 920,905 940,893 980,878 1000,865 1030,846 1037,846'],
      ['#00f', 1, '210,920 525,725', 1], ['#00f', 1, '197,730 212,730']],
    deals: [[70, 914, 'left', '#00f'], [199, 924, 'right', '#00f'], [528, 725, 'left', '#00f']],
    labels: [['symbol', 71, 200, 'USDCAD,M1'], ['win-tag', 450, 750, '1675.14'], ['win-tag', 61, 942, '9'], ['count', 1090, 382, '&lt; 00:00:23'], ['level', 1063, 215, '1.39400'], ['level', 1063, 563, '1.39300'], ['level', 1063, 914, '1.39200']],
    axis: [[232, '1.39395'], [442, '1.39335'], [547, '1.39305'], [650, '1.39275'], [755, '1.39245'], [859, '1.39215'], [965, '1.39185'], [1069, '1.39155'], [1174, '1.39125'], [337, '1.39365', 'ask'], [361, '1.39358', 'now']],
    ind: { view: [61, 58, 1382, 369], title: 'SSRC( SR:3, FP:21 ) 0.4703', marks: [82, 109, 245, 379, 406],
      blue: '63,163 75,110 90,75 105,66 130,63 160,66 172,80 182,130 192,210 205,290 215,312 222,318 240,315 260,322 285,325 298,338 310,362 322,385 332,394 345,385 360,330 378,245 390,150 400,95 412,75 430,68 447,74 465,88 482,118 495,134 530,135 542,141 555,130 567,108 580,92 605,87 625,98 640,130 655,220 670,300 682,355 698,387 712,360 722,290 735,190 750,115 765,78 780,65 795,62 812,75 830,120 845,190 858,260 869,302 883,265 900,200 915,130 930,85 942,68 965,63 990,66 1007,80 1022,110 1037,160',
      yellow: '63,61 200,61 205,65 245,65 252,70 293,72 300,85 345,88 355,94 710,94 718,88 760,88 768,76 805,76 812,68 850,68 860,65 900,65 905,62 1037,61',
      news: [489, 1041], times: ['29 Dec 2015', '29 Dec 11:41', '29 Dec 11:57', '29 Dec 12:13', '29 Dec 12:29', '29 Dec 12:45', '29 Dec 13:01'], step: 64 }
  },
  {
    symbol: 'EURUSD,M1', framed: true, under: true, box: { left: 696, top: 472, width: 601, bottom: 0 }, pad: '0 9px 0 8px', plotW: 537,
    view: [158, 499, 1276, 743], tool: 409, panel: 1065, lots: '0.69', marker: 1072,
    account: ['250708.86', '247392.87', '222756.57', '11.15%'],
    levels: [['#00f', 670], ['#00f', 1069], ['#4b0082', 1060], ['#fff', 1100]],
    bars: 'r 162 965 1030 170 987 1030 207 965 1030 217 940 990 227 863 965 236 903 1030 245 1018 1030 264 912 1030 273 955 1030 283 947 1030 b 417 947 1030 427 780 960 436 753 877 445 725 773 455 717 773 464 753 867 474 717 830 483 708 755 493 587 830 502 625 773 512 708 897 r 521 846 977 530 957 1063 540 938 1005 549 912 1020 559 912 1175 568 1005 1165 578 838 1045 588 1030 1240 597 1080 1165 607 1172 1240 616 1090 1240 626 1090 1240 635 1115 1158 645 1133 1183 654 957 1155 673 957 1010 682 965 1010 692 930 1000 702 977 1010 711 957 1000 720 940 1000 730 940 1000 740 917 1100 749 1000 1100 758 1000 1100 768 1000 1052 778 1022 1045 787 1030 1190 797 1183 1203 807 1173 1240 816 965 1145 825 1030 1230 835 1087 1155 844 1117 1180 854 1143 1240 863 1143 1240 911 1173 1240 930 1090 1240 940 1090 1163 949 1088 1240 b 958 987 1212 968 1075 1185 978 930 1175 988 930 1083 997 925 1090 1006 905 1043 1016 987 1083 r 1053 1098 1118',
    lines: [
      ['#f00', 1, '663,940 663,960'], ['#f00', 1, '1025,947 1025,1090 1034,1090 1034,1210'], ['#1e90ff', 1, '1044,1090 1044,1145'],
      ['#f00', 1, '285,505 330,530 365,560 390,585 420,605 470,615 520,635 580,668 640,680 710,675 760,690 830,712 900,733 960,738 1000,752 1040,765 1046,773', 1],
      ['#f00', 1, '440,1190 500,1150 580,1100 650,1055 700,1035', 1],
      ['#0f0', 1, '160,802 200,850 250,897 300,940 350,975 400,998 460,1015 520,1040 600,1068 660,1075 740,1082 800,1090 860,1098 950,1102 1010,1108 1053,1115']],
    suns: [[993, 903]], deals: [[755, 995, 'left', '#f00']],
    labels: [['symbol', 166, 524, 'EURUSD,M1'], ['loss-tag', 678, 1024, '-894.17'], ['level', 1079, 1062, '1.09700']],
    axis: [[642, '1.09745'], [782, '1.09730'], [922, '1.09715'], [1202, '1.09685'], [1060, '1.09700', 'ask'], [1100, '1.09696', 'now']]
  },
  {
    symbol: 'EURGBP,M1', framed: true, active: true, box: { left: 164, top: 681, width: 659, bottom: 0 }, pad: '0 8px', plotW: 597,
    view: [454, 1160, 1397, 112], levels: [], bars: '', lines: [],
    labels: [['dim symbol', 462, 1185, 'EURGBP,M1'], ['dim', 466, 1223, '2015.12.29 12:09'], ['dim', 466, 1259, 'Currencies to analize: AUD, NZD, JPY, EUR, CHF, GBP, USD, CAD'], ['dim', 1493, 1187, 'SimEA_Desk_v1.97_GuruVer_2☺'], ['note', 1006, 1237, 'Указан процент прибыли относительно баланса на начало месяца'], ['note', 950, 1273, 'Прибыль'], ['note', 1290, 1273, 'в пунктах'], ['note', 1442, 1273, 'в лотах'], ['note', 1660, 1273, 'в валюте']],
    axis: [[1166, '0.73370'], [1269, '0.73345']]
  }
];

const px = n => n + 'px';
const pctX = (v, x) => (100 * (x - v[0]) / v[2]).toFixed(2) + '%';
const pctY = (v, y) => (100 * (y - v[1]) / v[3]).toFixed(2) + '%';

function barsSvg(data) {
  const d = { b: '', r: '' };
  const t = data.split(' ');
  let color = 'b';
  for (let i = 0; i < t.length;) {
    if (t[i] === 'b' || t[i] === 'r') { color = t[i++]; continue; }
    d[color] += `M${t[i]} ${t[i + 1]}V${t[i + 2]}`;
    i += 3;
  }
  return Object.keys(d).map(k => `<path d="${d[k]}" stroke="${COLORS[k]}" stroke-width="3"/>`).join('');
}

const DASH = { d: 'stroke-dasharray="3 3"', dd: 'stroke-dasharray="9 5 2 5"' };
const levelSvg = v => ([color, y, dash]) => `<path d="M${v[0]} ${y}H${v[0] + v[2]}" stroke="${color}" ${DASH[dash] || ''}/>`;
const lineSvg = ([color, w, pts, dotted]) => `<polyline points="${pts}" stroke="${color}" stroke-width="${w}" ${dotted ? 'stroke-dasharray="3 3"' : ''}/>`;

function spikes(n, outer, inner) {
  let p = '';
  for (let i = 0; i < n * 2; i++) {
    const r = i % 2 ? inner : outer, a = Math.PI * i / n;
    p += `${(r * Math.sin(a)).toFixed(1)},${(-r * Math.cos(a)).toFixed(1)} `;
  }
  return p;
}
const unit = c => c.view[2] / c.plotW;
const sunSvg = c => ([x, y, ring]) => `<g transform="translate(${x} ${y}) scale(${unit(c).toFixed(2)} 3)">` +
  (ring ? `<polygon points="${spikes(9, 15, 10)}" fill="${ring}"/><circle r="9" fill="#000"/>` : '') +
  `<polygon points="${spikes(12, 8, 6)}" fill="#ff0"/></g>`;
const dealSvg = c => ([x, y, dir, color]) => `<g transform="translate(${x} ${y}) scale(${(dir === 'left' ? 1 : -1) * unit(c).toFixed(2)} 3)"><circle r="9" fill="none" stroke="#fff"/><polygon points="-4,0 2,-5 2,5" fill="${color}" stroke="#fff"/></g>`;

const svg = (v, inner) => `<svg viewBox="${v.join(' ')}" preserveAspectRatio="none" aria-hidden="true">${inner}</svg>`;
const labelHtml = v => ([cls, x, y, text]) => `<span class="label ${cls}" style="left:${pctX(v, x)};top:${pctY(v, y)}">${text}</span>`;

const TOOLS = ['windows', 'bars', 'line', 'channel', 'shuffle', 'clock', 'eye', 'bucket', 'spread', 'camera'];
const toolbar = c => `<div class="toolbar" style="left:${pctX(c.view, c.tool)}">` + TOOLS.map(t =>
  `<button aria-label="${t}" class="${(t === 'windows' && !c.under) || t === 'bars' || t === 'bucket' ? 'on' : ''}"><svg><use href="#i-${t}"/></svg></button>`).join('') + '</div>';

function panel(c) {
  const a = c.account, zero = '0 | 0.00 | 0.0 | 0.00', buy = c.buy || zero, hot = buy !== zero ? 'red' : '';
  const cross = '<svg aria-hidden="true"><use href="#i-cross"/></svg>';
  const rule = '<div class="rule">-----------------------------------------</div>';
  const row = (k, val, kc = '', vc = '') => `<div><dt class="${kc}">${k}</dt><dd class="${vc}">${val}</dd></div>`;
  return `<aside class="panel" style="left:${pctX(c.view, c.panel)}">
    <h3><svg><use href="#i-bag"/></svg><span>Control Panel</span></h3>
    <div class="keys"><button><i>▴</i>Buy ${c.lots}</button><button><i>▾</i>Sell ${c.lots}</button><button>${cross}Partial</button><button>${cross}Close all</button><button><i>✔</i>Breakeven</button><button><i>()</i>Reverse</button></div>
    <h3><b></b><span>Account info</span></h3>
    <dl>${row('Balance:', a[0])}${row('Equity:', a[1], '', 'pink')}${row('Free margin:', a[2])}${row('Drawdown:', a[3])}${rule}
    ${row('Buy:', buy, 'cyan', hot)}${row('Sell:', zero, 'pink')}${rule}${row('Sum:', buy, 'gold', hot)}${row('Avg:', c.avg || '', 'gold')}</dl></aside>`;
}

const axis = (v, rows) => `<div class="axis">${rows.map(([y, t, cls]) => `<span class="${cls || ''}" style="top:${pctY(v, y)}">${t}</span>`).join('')}</div>`;

function indicator(c) {
  const i = c.ind, v = i.view;
  const names = ['0.9', '0.75', '0.00', '-0.75', '-0.9'];
  const dashes = i.marks.filter((m, n) => n !== 2).map(y => levelSvg(v)(['#8b0000', y, 'd'])).join('');
  const nv = [v[0], 0, v[2], 10];
  return `<div class="plot">${svg(v, dashes + lineSvg(['#1e90ff', 2, i.blue]) + lineSvg(['#ff0', 1, i.yellow]))}${labelHtml(v)(['', v[0] + 10, i.marks[0] + 5, i.title])}</div>
    <div class="axis small">${names.map((n, k) => `<span style="top:${pctY(v, i.marks[k])}">${n}</span>`).join('')}</div>
    <div class="plot">${svg(nv, `<rect x="${i.news[0]}" y="0" width="${i.news[1] - i.news[0]}" height="10" fill="#0f0"/>`)}${labelHtml(nv)(['', v[0] + 10, 6, 'WUKAR_News 1.0000 0.0000 0.0000'])}</div>
    <div class="axis small"><span style="top:50%">0</span></div>
    <div class="times" style="grid-auto-columns:${px(i.step)};grid-auto-flow:column">${i.times.map(t => `<span>${t}</span>`).join('')}</div>`;
}

function windowHtml(c) {
  const place = Object.entries(c.box).map(([k, n]) => `${k}:${px(n)}`).join(';');
  const v = c.view;
  const head = c.framed ? `<header><svg class="ico"><use href="#i-chart"/></svg><h2>${c.symbol}</h2><div class="sysbuttons">
    <button class="sys" aria-label="Minimize"><svg><use href="#i-min"/></svg></button><button class="sys" aria-label="Maximize"><svg><use href="#i-max"/></svg></button><button class="sys close" aria-label="Close"><svg><use href="#i-close"/></svg></button></div></header>` : '';
  const rows = c.ind ? `${px(c.plotH)} ${px(c.indH)} 16px 1fr` : '1fr';
  const marks = c.levels.map(levelSvg(v)).join('') + (c.bars && barsSvg(c.bars)) + c.lines.map(lineSvg).join('') + (c.deals || []).map(dealSvg(c)).join('') + (c.suns || []).map(sunSvg(c)).join('');
  return `<section class="win ${c.framed ? 'framed' : ''} ${c.active ? 'active' : ''} ${c.under ? 'under-panel' : ''}" style="${place};padding:${c.pad}">${head}
    <div class="body" style="grid-template:${rows} / ${px(c.plotW)} 1fr">
      <div class="plot">${svg(v, marks)}${c.account ? panel(c) + toolbar(c) : ''}${c.labels.map(labelHtml(v)).join('')}${c.marker ? labelHtml(v)(['shift', c.marker, v[1], '']) : ''}</div>
      ${axis(v, c.axis)}${c.ind ? indicator(c) : ''}
    </div></section>`;
}

document.getElementById('workspace').innerHTML = CHARTS.map(windowHtml).join('');
```
